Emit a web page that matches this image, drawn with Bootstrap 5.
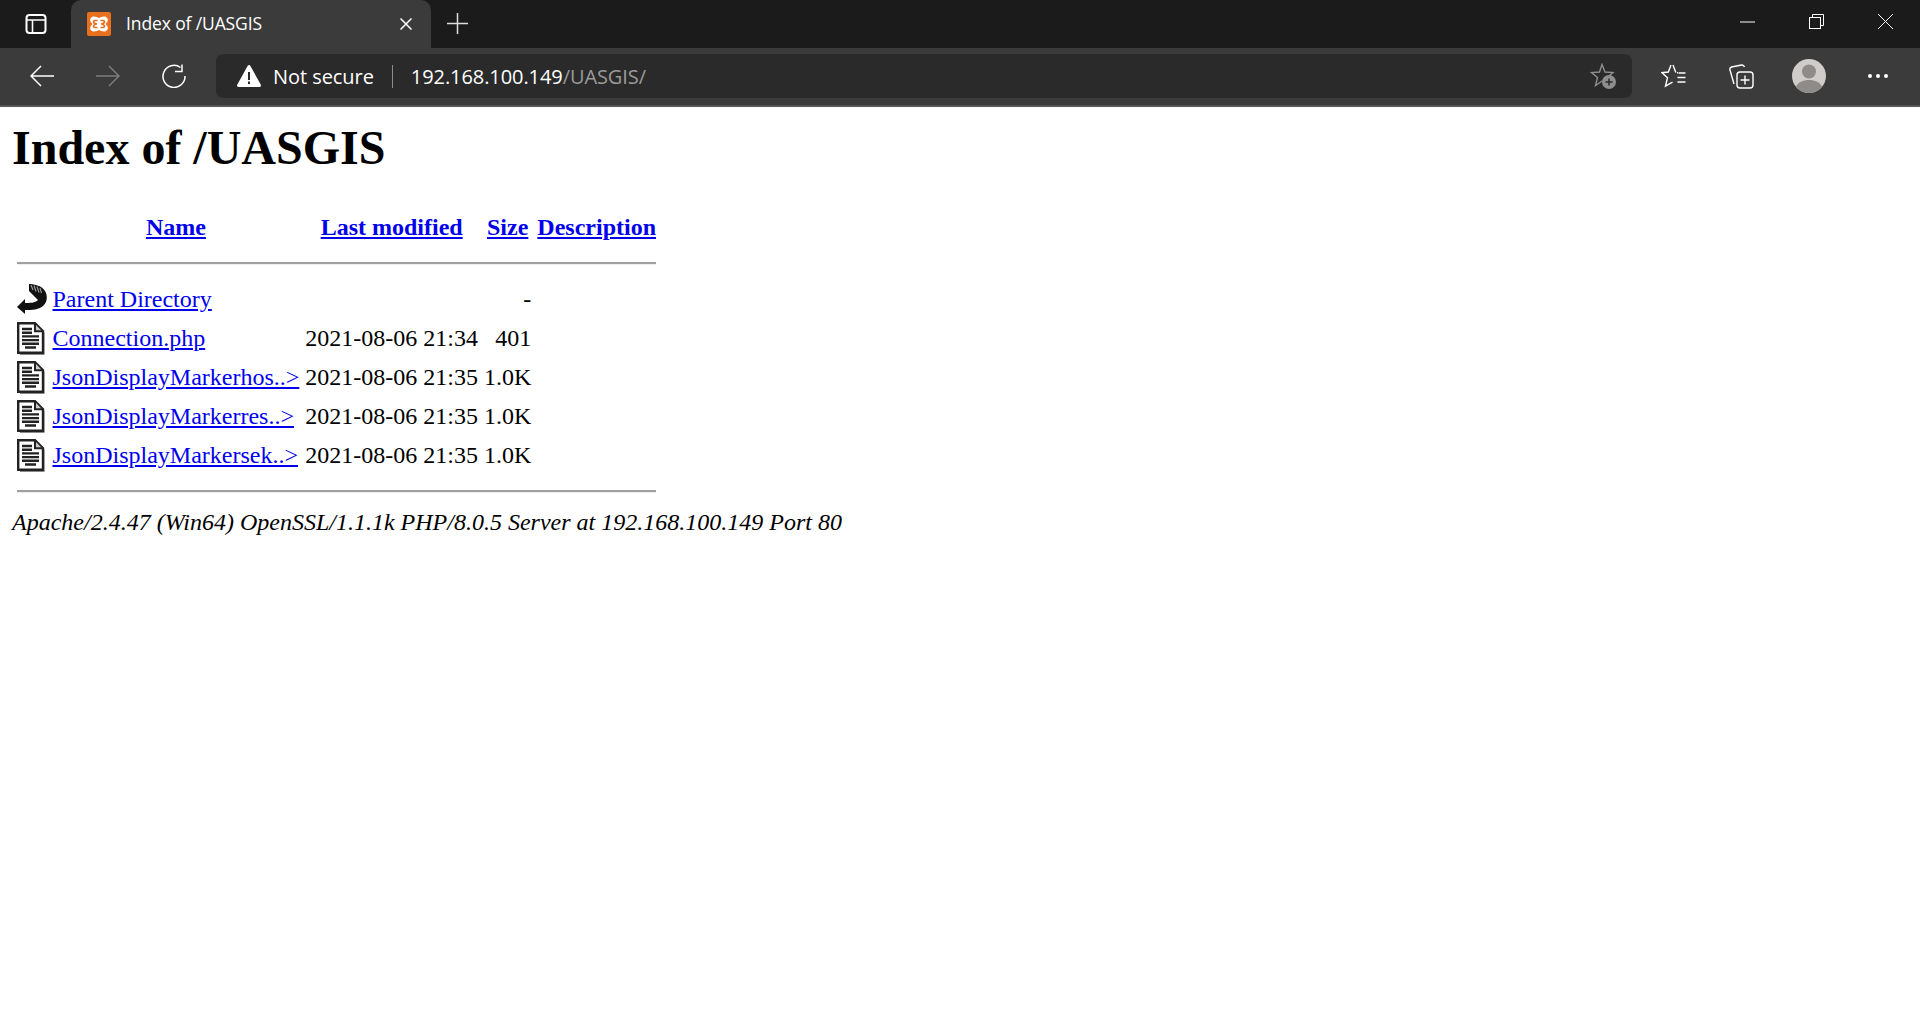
<!DOCTYPE html>
<html lang="en">
<head>
  <meta charset="UTF-8" />
  <title>Index of /UASGIS</title>
  <link href="https://cdn.jsdelivr.net/npm/bootstrap@5.3.0/dist/css/bootstrap.min.css" rel="stylesheet" />
  <style>
    html, body { height: 100%; }
    body { background: #fff; overflow: hidden; font-family: "Liberation Serif", serif; font-size: 24px; line-height: normal; color: #000; }
    svg { display: block; flex: none; }

    /* browser chrome */
    .chrome-ui { font-family: "Open Sans", "Noto Sans", sans-serif; color: #fff; }
    .tab-strip { height: 48px; background: #1b1b1b; }
    .strip-btn { width: 71px; height: 48px; }
    .page-tab { width: 360px; height: 48px; background: #3b3b3b; border-radius: 10px 10px 0 0; padding: 0 19px 0 16px; }
    .tab-title { font-size: 17.5px; letter-spacing: -.12px; margin-left: 15px; padding-bottom: 2px; white-space: nowrap; }
    .new-tab { padding-bottom: 2px; }
    .win-btn { width: 69px; height: 48px; padding-bottom: 5px; }
    .tool-strip { height: 59px; background: #3b3b3b; border-bottom: 2px solid #565656; padding: 0 9px 1px 9px; }
    .tool-btn { width: 66px; height: 44px; }
    .tool-btn-right { width: 67.5px; height: 44px; }
    .addr-bar { width: 1416px; height: 44px; background: #2a2a2a; border-radius: 7px; margin-left: 9px; padding: 0 16px 0 21px; }
    .addr-warn { font-size: 20px; letter-spacing: -.06px; margin-left: 12px; white-space: nowrap; }
    .addr-sep { width: 1px; height: 23px; background: #8c8c8c; margin: 0 18px; }
    .addr-url { font-size: 20px; letter-spacing: -.08px; white-space: nowrap; }
    .addr-path { color: #9a9a9a; }

    /* apache listing */
    .listing { padding: 13px 12px 0; }
    .listing h1 { font-family: inherit; font-size: 48px; font-weight: 700; line-height: 55px; margin: 0 0 34px; }
    .listing table { border-collapse: separate; border-spacing: 3px; }
    .listing th, .listing td { padding: 1.5px; }
    .listing th { text-align: center; font-weight: 700; }
    .listing a { color: #00e; text-decoration: underline; }
    .align-end { text-align: right; }
    .listing-rule { border: 0; border-top: 2px solid #a0a0a0; border-bottom: 1px solid #eee; opacity: 1; margin: 15px 0 12px; height: 0; }
    .listing-rule-end { margin: 12px 0 12px; }
    .listing address { font-style: italic; margin: 0; }
    .file-ico { width: 30px; height: 33px; }
  </style>
</head>
<body>

<svg width="0" height="0" class="position-absolute">
  <symbol id="docIcon" viewBox="0 0 30 33">
    <path d="M3 3h16l8.500 8v22H3z" fill="#8a8a8a"/>
    <path d="M1.200 1.200h16.800l8 8v21.600H1.200z" fill="#fff" stroke="#222" stroke-width="2.400"/>
    <path d="M18 2v7.200h7" fill="#ccc" stroke="#222" stroke-width="2"/>
    <path d="M5 7h10M5 10.700h10M5 14.400h17M5 18.100h17M5 21.800h17M8 25.500h11" stroke="#222" stroke-width="2.400"/>
  </symbol>
</svg>

<!-- Browser chrome -->
<div class="chrome-ui">
  <div class="tab-strip d-flex">
    <div class="strip-btn d-flex align-items-center justify-content-center">
      <svg width="22" height="22" viewBox="0 0 22 22" fill="none" stroke="#fff" stroke-width="2"><rect x="1.500" y="2" width="19" height="18" rx="3"/><path d="M2 7h18M7.500 7v13" stroke-width="1.600"/></svg>
    </div>
    <div class="page-tab d-flex align-items-center">
      <svg width="24" height="24" viewBox="0 0 24 24"><rect width="24" height="24" rx="2" fill="#e8701e"/><path d="M7 4.500c2.200 0 3.500 1 5 1.500 1.500-.5 2.800-1.500 5-1.500 3 0 4.500 2.500 3.500 5-.4 1-1.300 1.800-2 2.500.7.700 1.600 1.500 2 2.500 1 2.500-.5 5-3.500 5-2.200 0-3.500-1-5-1.500-1.500.5-2.800 1.500-5 1.500-3 0-4.500-2.500-3.500-5 .4-1 1.300-1.800 2-2.500-.7-.7-1.600-1.500-2-2.500-1-2.500.5-5 3.500-5z" fill="#fff"/><path d="M10.500 8.500H8.200c-1.500 0-2 1-1.500 2 .4.800 1.300 1.500 3.300 1.500-2 0-2.900.7-3.300 1.500-.5 1 0 2 1.500 2h2.300M13.500 8.500h2.300c1.500 0 2 1 1.500 2-.4.800-1.300 1.500-3.300 1.500 2 0 2.900.7 3.300 1.500.5 1 0 2-1.500 2h-2.300" stroke="#e8701e" stroke-width="1.700" fill="none"/></svg>
      <span class="tab-title">Index of /UASGIS</span>
      <svg class="ms-auto" width="12" height="12" viewBox="0 0 12 12" stroke="#fff" stroke-width="1.500"><path d="M.5.5l11 11M11.500.5l-11 11"/></svg>
    </div>
    <div class="new-tab d-flex align-items-center ms-3">
      <svg width="21" height="21" viewBox="0 0 21 21" stroke="#ddd" stroke-width="1.500"><path d="M10.500 0v21M0 10.500h21"/></svg>
    </div>
    <div class="d-flex ms-auto">
      <div class="win-btn d-flex align-items-center justify-content-center">
        <svg width="15" height="2" viewBox="0 0 15 2" stroke="#fff"><path d="M0 1h15"/></svg>
      </div>
      <div class="win-btn d-flex align-items-center justify-content-center">
        <svg width="15" height="15" viewBox="0 0 15 15" fill="none" stroke="#fff"><rect x=".5" y="3.500" width="11" height="11"/><path d="M3.500 3.500V.5h11v11h-3"/></svg>
      </div>
      <div class="win-btn d-flex align-items-center justify-content-center">
        <svg width="15" height="15" viewBox="0 0 15 15" stroke="#fff"><path d="M0 0l15 15M15 0L0 15"/></svg>
      </div>
    </div>
  </div>
  <div class="tool-strip d-flex align-items-center">
    <div class="tool-btn d-flex align-items-center justify-content-center">
      <svg width="24" height="22" viewBox="0 0 24 22" fill="none" stroke="#fff" stroke-width="1.500"><path d="M24 11H1.500M11 1L1 11l10 10"/></svg>
    </div>
    <div class="tool-btn d-flex align-items-center justify-content-center">
      <svg width="24" height="22" viewBox="0 0 24 22" fill="none" stroke="#7c7c7c" stroke-width="1.500"><path d="M0 11h22.500M13 1l10 10-10 10"/></svg>
    </div>
    <div class="tool-btn d-flex align-items-center justify-content-center">
      <svg width="24" height="24" viewBox="0 0 24 24" fill="none" stroke="#fff" stroke-width="1.500"><path d="M18.500 3.500A11 11 0 1 0 23 12"/><path d="M20 .5v7h-7"/></svg>
    </div>
    <div class="addr-bar d-flex align-items-center">
      <svg width="24" height="22" viewBox="0 0 24 22"><path d="M12 0a1.500 1.500 0 0 1 1.300.8l10.500 19a1.500 1.500 0 0 1-1.300 2.200h-21a1.500 1.500 0 0 1-1.300-2.200L10.700.8A1.500 1.500 0 0 1 12 0z" fill="#fff"/><path d="M11 7h2v8h-2zM11 16.500h2v2.500h-2z" fill="#2a2a2a"/></svg>
      <span class="addr-warn">Not secure</span>
      <span class="addr-sep"></span>
      <span class="addr-url">192.168.100.149<span class="addr-path">/UASGIS/</span></span>
      <svg class="ms-auto" width="26" height="26" viewBox="0 0 26 26" fill="none"><path d="M12 1.500l3 7.500 8 .5-6 5 2 8-7-4.500-6.500 4.500 2-8-6-5 8-.5z" stroke="#8e8e8e" stroke-width="1.400"/><circle cx="19" cy="19" r="7" fill="#8e8e8e"/><path d="M15.500 19h7M19 15.500v7" stroke="#2a2a2a" stroke-width="1.500"/></svg>
    </div>
    <div class="d-flex ms-2">
      <div class="tool-btn-right d-flex align-items-center justify-content-center">
        <svg width="25" height="24" viewBox="0 0 25 24" fill="none" stroke="#fff" stroke-width="1.400"><path d="M12 1l2.800 7.500M16 8.700h1M10 1l-2.700 7L1 8.700l5.500 5-2 8.500 7-4M24.500 9h-7M24.500 13.500h-8M24.500 18h-8" /></svg>
      </div>
      <div class="tool-btn-right d-flex align-items-center justify-content-center">
        <svg width="25" height="25" viewBox="0 0 25 25" fill="none" stroke="#fff" stroke-width="1.400"><path d="M5 20L1 6c-.4-1.500.3-2.500 1.500-3l10-2c1.500-.2 2.500.5 3 2"/><rect x="8" y="8" width="16" height="16" rx="3"/><path d="M16 11.500v9M11.500 16h9"/></svg>
      </div>
      <div class="tool-btn-right d-flex align-items-center justify-content-center">
        <svg width="34" height="34" viewBox="0 0 34 34"><circle cx="17" cy="17" r="17" fill="#cfcdc9"/><circle cx="17" cy="12.500" r="7" fill="#8e8b88"/><path d="M4 28c2-5 7-7 13-7s11 2 13 7a17 17 0 0 1-26 0z" fill="#8e8b88"/></svg>
      </div>
      <div class="tool-btn-right d-flex align-items-center justify-content-center ps-1">
        <svg width="20" height="4" viewBox="0 0 20 4" fill="#fff"><circle cx="2" cy="2" r="2"/><circle cx="10" cy="2" r="2"/><circle cx="18" cy="2" r="2"/></svg>
      </div>
    </div>
  </div>
</div>

<!-- Directory listing -->
<div class="listing">
  <h1>Index of /UASGIS</h1>
  <table>
    <tr>
      <th></th>
      <th><a href="#">Name</a></th>
      <th><a href="#">Last modified</a></th>
      <th><a href="#">Size</a></th>
      <th><a href="#">Description</a></th>
    </tr>
    <tr><th colspan="5"><hr class="listing-rule" /></th></tr>
    <tr>
      <td>
        <svg class="file-ico" viewBox="0 0 30 33">
          <path d="M0 24l8-8v4c5 0 10 0 13-3l-5-5-4-4V1c6 0 13 2 16 7s2 11-1 14c-5 5-12 5-19 5v4z" fill="#111"/>
          <path d="M14 2l2 5M17 2.500l2 6M20 3.500l2 6M23 5l1.500 5" stroke="#999" stroke-width="1.200"/>
        </svg>
      </td>
      <td><a href="#">Parent Directory</a></td>
      <td></td>
      <td class="align-end">- </td>
      <td></td>
    </tr>
    <tr>
      <td><svg class="file-ico"><use href="#docIcon"/></svg></td>
      <td><a href="#">Connection.php</a></td>
      <td class="align-end">2021-08-06 21:34</td>
      <td class="align-end">401</td>
      <td></td>
    </tr>
    <tr>
      <td><svg class="file-ico"><use href="#docIcon"/></svg></td>
      <td><a href="#">JsonDisplayMarkerhos..&gt;</a></td>
      <td class="align-end">2021-08-06 21:35</td>
      <td class="align-end">1.0K</td>
      <td></td>
    </tr>
    <tr>
      <td><svg class="file-ico"><use href="#docIcon"/></svg></td>
      <td><a href="#">JsonDisplayMarkerres..&gt;</a></td>
      <td class="align-end">2021-08-06 21:35</td>
      <td class="align-end">1.0K</td>
      <td></td>
    </tr>
    <tr>
      <td><svg class="file-ico"><use href="#docIcon"/></svg></td>
      <td><a href="#">JsonDisplayMarkersek..&gt;</a></td>
      <td class="align-end">2021-08-06 21:35</td>
      <td class="align-end">1.0K</td>
      <td></td>
    </tr>
    <tr><th colspan="5"><hr class="listing-rule listing-rule-end" /></th></tr>
  </table>
  <address>Apache/2.4.47 (Win64) OpenSSL/1.1.1k PHP/8.0.5 Server at 192.168.100.149 Port 80</address>
</div>

<script src="https://cdn.jsdelivr.net/npm/bootstrap@5.3.0/dist/js/bootstrap.bundle.min.js"></script>
</body>
</html>
